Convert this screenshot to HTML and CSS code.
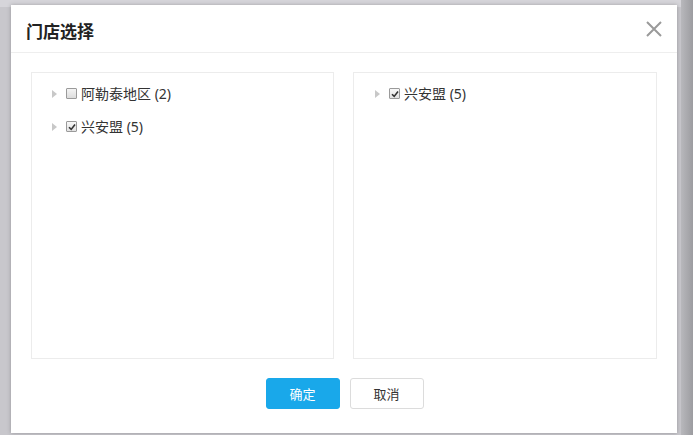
FILE: index.html
```html
<!DOCTYPE html>
<html lang="zh">
<head>
<meta charset="utf-8">
<title>门店选择</title>
<link rel="stylesheet" href="styles.css">
</head>
<body>
<div class="backdrop">
  <div class="modal">
    <div class="modal-header">
      <h3 class="modal-title">门店选择</h3>
      <button class="close" aria-label="关闭">
        <svg width="16" height="16" viewBox="0 0 16 16"><path d="M1 1 L15 15 M15 1 L1 15" stroke="#9a9a9a" stroke-width="2" fill="none"/></svg>
      </button>
    </div>
    <div class="modal-body">
      <div class="panel panel-left">
        <div class="tree-row">
          <span class="caret"></span>
          <span class="cbox"></span>
          <span class="label">阿勒泰地区 (2)</span>
        </div>
        <div class="tree-row">
          <span class="caret"></span>
          <span class="cbox checked"><svg width="8" height="8" viewBox="0 0 8 8"><path d="M1 4.2 L3.2 6.4 L7 1.4" stroke="#333" stroke-width="1.6" fill="none"/></svg></span>
          <span class="label">兴安盟 (5)</span>
        </div>
      </div>
      <div class="panel panel-right">
        <div class="tree-row">
          <span class="caret"></span>
          <span class="cbox checked"><svg width="8" height="8" viewBox="0 0 8 8"><path d="M1 4.2 L3.2 6.4 L7 1.4" stroke="#333" stroke-width="1.6" fill="none"/></svg></span>
          <span class="label">兴安盟 (5)</span>
        </div>
      </div>
    </div>
    <div class="modal-footer">
      <button class="btn btn-primary">确定</button>
      <button class="btn btn-default">取消</button>
    </div>
  </div>
  <div class="scroll-strip"></div>
</div>
</body>
</html>
```
FILE: styles.css
```css
html, body {
  margin: 0;
  padding: 0;
}
body {
  width: 693px;
  height: 435px;
  overflow: hidden;
  background: #c9c8cd;
  font-family: "Noto Sans", "Noto Sans CJK SC", sans-serif;
  color: #333;
}
.backdrop {
  display: flex;
  height: 435px;
  background: linear-gradient(#d6d5da 0, #d6d5da 7px, #c8c7cc 7px);
}
.modal {
  margin: 5px 0 0 11px;
  width: 666px;
  height: 428px;
  flex: 0 0 666px;
  background: #fff;
  box-shadow: 0 0 4px rgba(0,0,0,0.25);
  display: flex;
  flex-direction: column;
}
.scroll-strip {
  margin-left: auto;
  width: 12px;
  background: linear-gradient(to right, #b8b8bc, #9c9ca0);
}
.modal-header {
  height: 47px;
  flex: 0 0 47px;
  border-bottom: 1px solid #eeeeee;
  display: flex;
  align-items: center;
  justify-content: space-between;
  padding: 0 15px 0 15px;
}
.modal-title {
  margin: 0;
  font-size: 17px;
  font-weight: 700;
  color: #222;
  padding-top: 4px;
}
.close {
  border: 0;
  background: none;
  padding: 0;
  width: 16px;
  height: 16px;
  margin-top: 1px;
}
.close svg { display: block; }
.modal-body {
  display: flex;
  gap: 19px;
  padding: 19px 20px 0 20px;
}
.panel {
  box-sizing: border-box;
  height: 287px;
  border: 1px solid #ececec;
  padding: 4px 0 0 20px;
}
.panel-left {
  flex: 0 0 303px;
}
.panel-right {
  flex: 0 0 304px;
  padding-left: 21px;
}
.tree-row {
  height: 33px;
  display: flex;
  align-items: center;
  font-size: 14px;
}
.caret {
  width: 0;
  height: 0;
  border-top: 4.5px solid transparent;
  border-bottom: 4.5px solid transparent;
  border-left: 5px solid #c8c8c8;
  margin-right: 9px;
}
.cbox {
  width: 9px;
  height: 9px;
  border: 1px solid #9a9a9a;
  border-radius: 1px;
  background: linear-gradient(#f4f4f4, #dcdcdc);
  display: flex;
  align-items: center;
  justify-content: center;
  margin-right: 4px;
}
.cbox.checked {
  background: linear-gradient(#f8f8f8, #e2e2e2);
}
.cbox svg { display: block; }
.label {
  color: #333;
  line-height: 16px;
}
.modal-footer {
  display: flex;
  justify-content: center;
  gap: 10px;
  padding-top: 19px;
  padding-left: 1px;
}
.btn {
  width: 74px;
  height: 31px;
  border-radius: 3px;
  font-size: 13px;
  font-family: "Noto Sans CJK SC", sans-serif;
  cursor: pointer;
}
.btn-primary {
  background: #19a8ea;
  border: 1px solid #19a8ea;
  color: #fff;
}
.btn-default {
  background: #fff;
  border: 1px solid #dcdcdc;
  color: #333;
}
```
